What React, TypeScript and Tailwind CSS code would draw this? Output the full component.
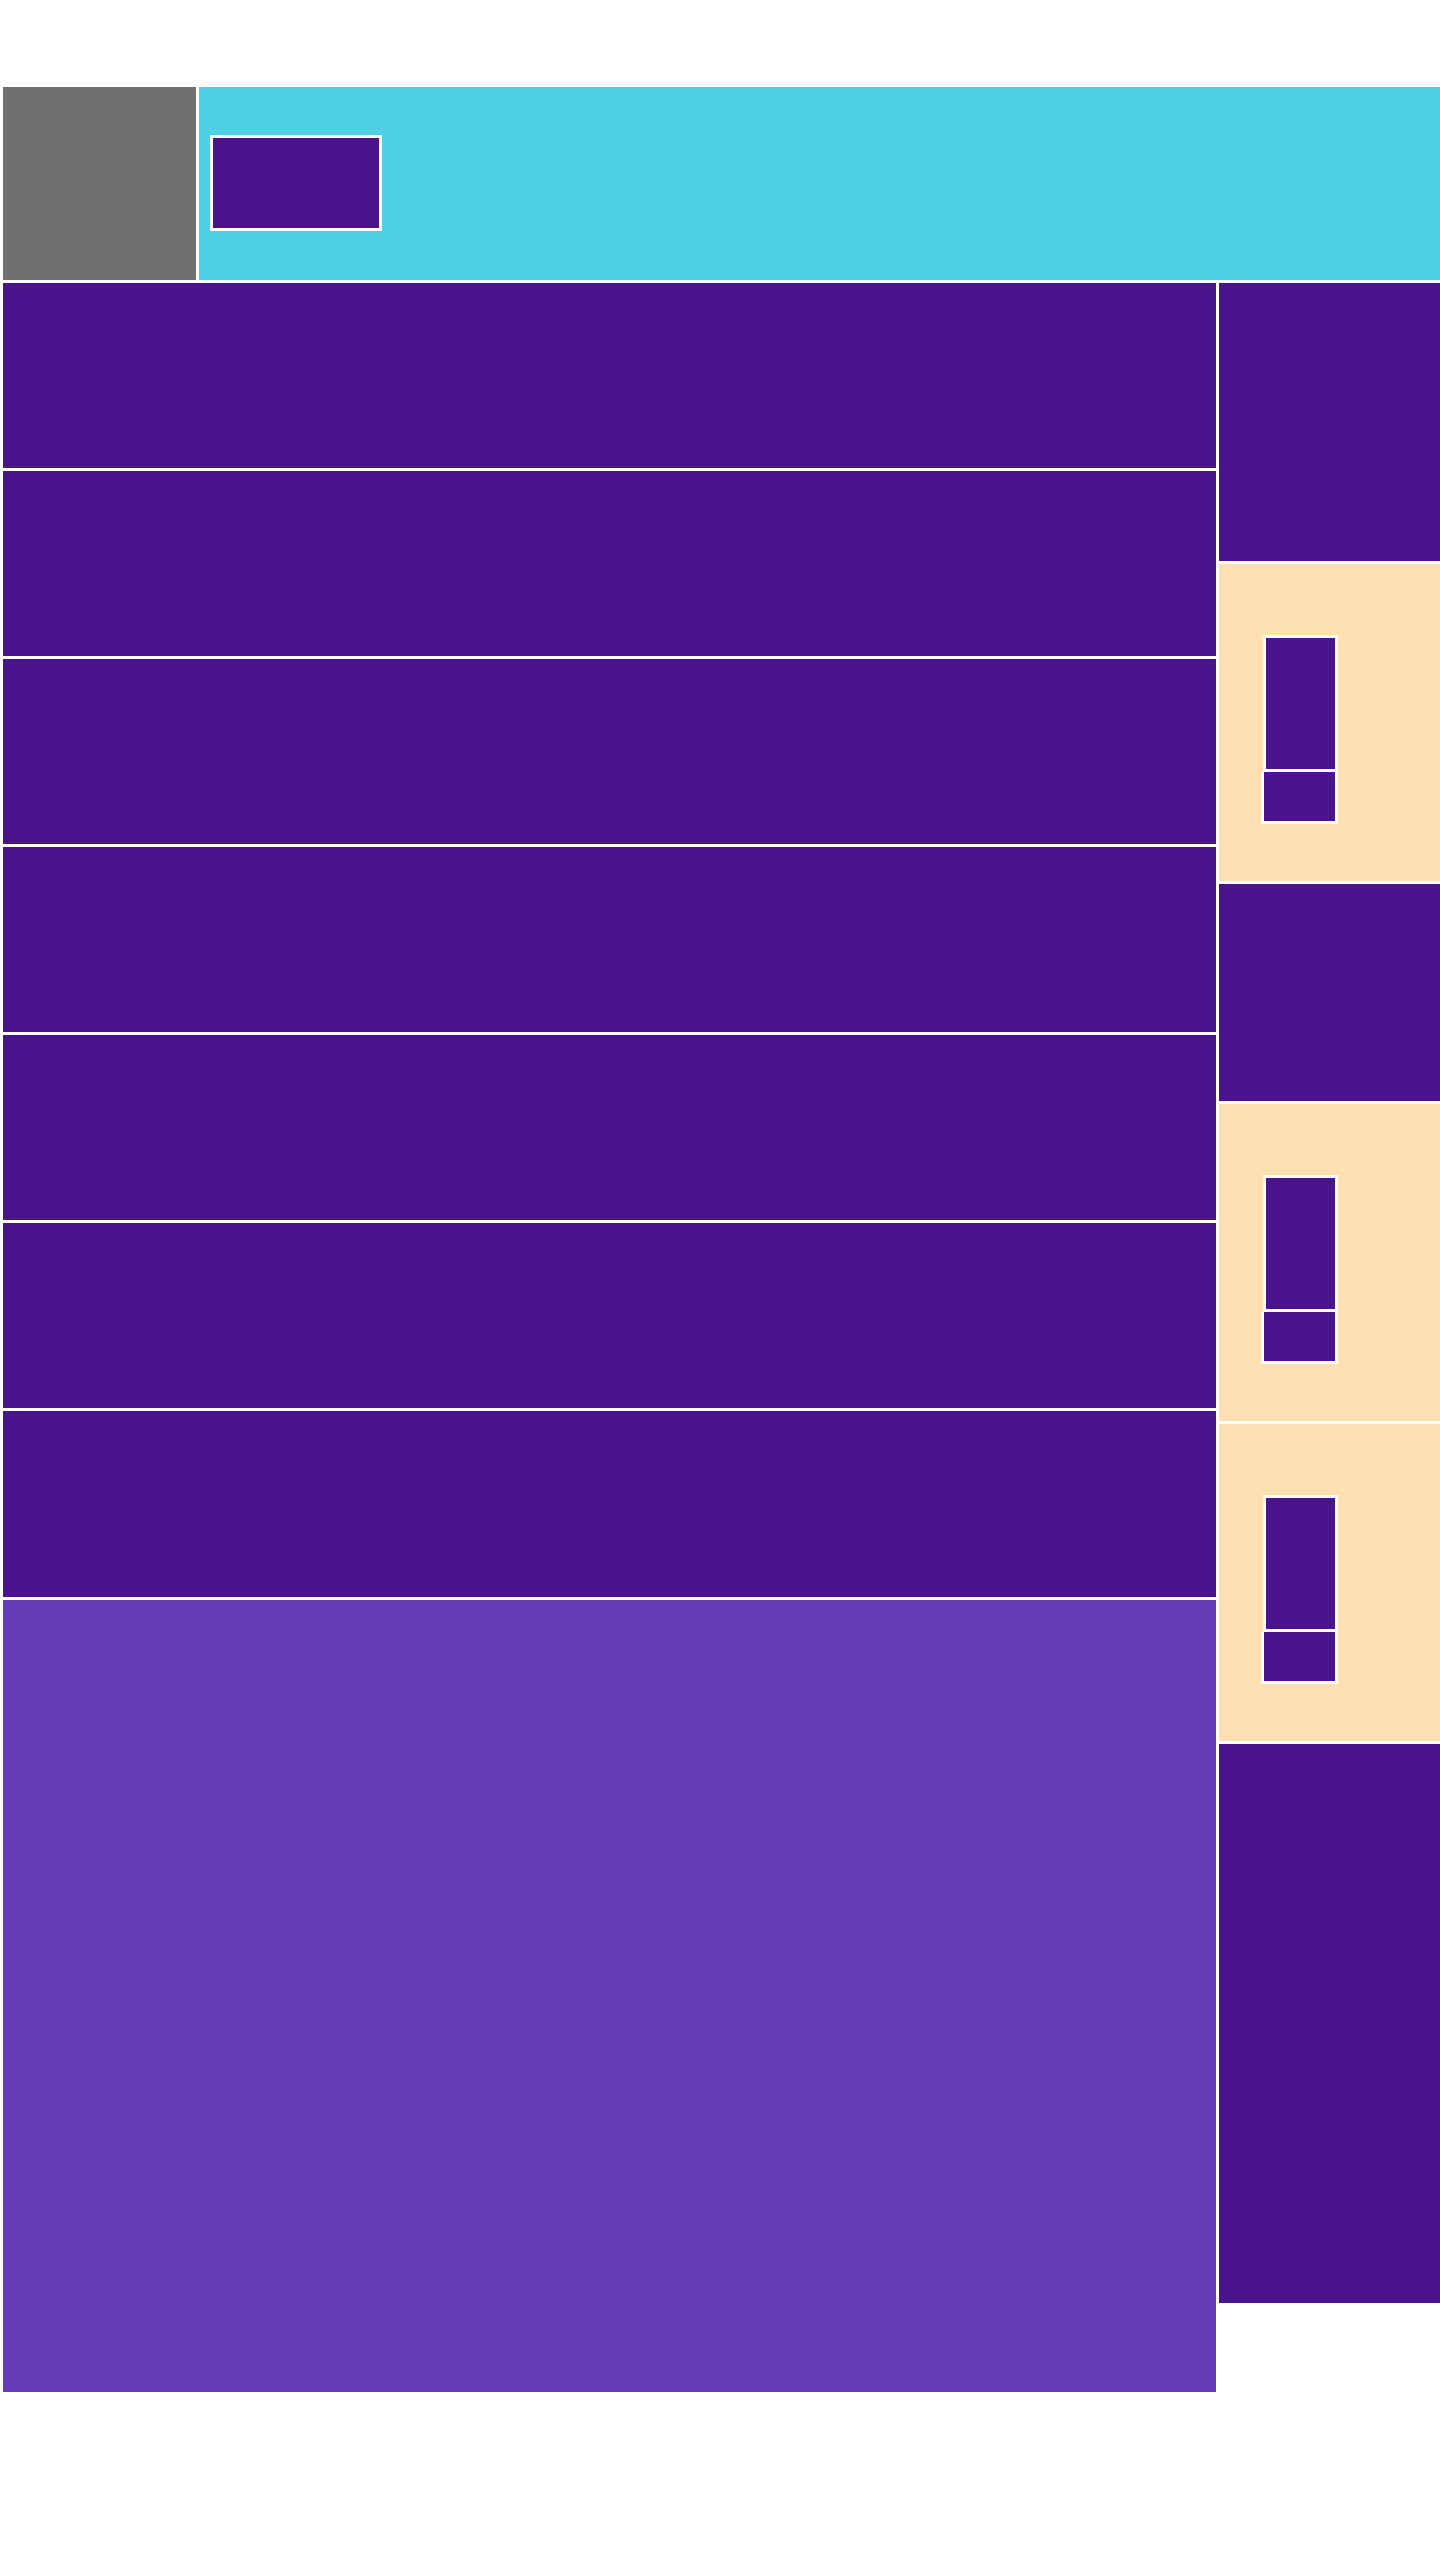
import React from "react";

const Peach = () => (
  <div className="h-[317px] bg-[#ffe0b2] pl-[44px] pt-[71px]">
    <div className="w-[75px] h-[137px] border-[3px] border-white bg-[#4a148c]" />
    <div className="ml-[-2px] w-[77px] h-[52px] border-x-[3px] border-b-[3px] border-white bg-[#4a148c]" />
  </div>
);

export default function App() {
  const rows = [185, 185, 185, 185, 185, 185, 186];
  return (
    <div className="min-h-screen bg-white pt-[87px] pl-[3px]">
      <div className="flex gap-[3px] h-[193px]">
        <div className="w-[193px] bg-[#707070]" />
        <div className="flex-1 bg-[#4dd0e1] pl-[11px] pt-[48px]">
          <div className="w-[172px] h-[96px] border-[3px] border-white bg-[#4a148c]" />
        </div>
      </div>
      <div className="flex gap-[3px] mt-[3px] items-start">
        <div className="w-[1213px] flex flex-col gap-[3px]">
          {rows.map((h, i) =>
            h === 186 ? (
              <div key={i} className="h-[186px] bg-[#4a148c]" />
            ) : (
              <div key={i} className="h-[185px] bg-[#4a148c]" />
            )
          )}
          <div className="h-[792px] bg-[#673ab7]" />
        </div>
        <div className="flex-1 flex flex-col gap-[3px]">
          <div className="h-[278px] bg-[#4a148c]" />
          <Peach />
          <div className="h-[217px] bg-[#4a148c]" />
          <Peach />
          <Peach />
          <div className="h-[559px] bg-[#4a148c]" />
        </div>
      </div>
    </div>
  );
}
